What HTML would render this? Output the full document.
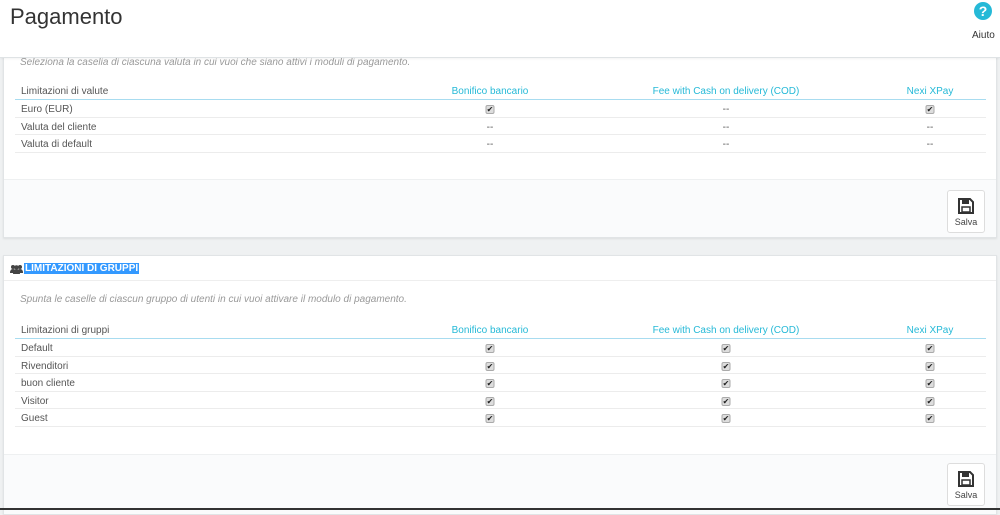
<!DOCTYPE html>
<html><head><meta charset="utf-8"><style>
*{margin:0;padding:0;box-sizing:border-box}
body{width:1000px;height:510px;overflow:hidden;background:#eff1f2;font-family:"Liberation Sans",sans-serif;position:relative;color:#555;font-size:10px}
.hdr{position:absolute;left:0;top:0;width:1000px;height:58px;background:#fff;border-bottom:1px solid #dfe3e5;z-index:5;box-shadow:0 1px 2px rgba(0,0,0,.05)}
.hdr h1{position:absolute;left:10px;top:4px;font-size:22px;font-weight:normal;color:#333}
.help{position:absolute;left:974px;top:2px;width:18px;height:18px;border-radius:50%;background:#25b9d7;color:#fff;font-weight:bold;font-size:14px;text-align:center;line-height:18px}
.aiuto{position:absolute;left:972px;top:30px;font-size:10px;color:#333}
.panel{position:absolute;left:3px;width:994px;background:#fff;border:1px solid #e1e4e6;box-shadow:0 1px 2px rgba(0,0,0,.08)}
.foot{position:absolute;left:0;right:0;bottom:0;background:#fafbfc;border-top:1px solid #eef0f1}
.desc{position:absolute;left:16px;font-style:italic;color:#999;font-size:10px}
.t{position:absolute;left:11px;width:971px}
.th{height:22px;border-bottom:1px solid #a8dcf0;position:relative}
.row{height:17.5px;border-bottom:1px solid #ececec;position:relative}
.c0{position:absolute;left:6px;top:4px}
.th .c0{top:8px}
.c{position:absolute;transform:translateX(-50%);top:4px;white-space:nowrap}
.th .c{color:#25b9d7;top:8px}
.cb{display:inline-block;width:9px;height:9px;background:#ddd;border:1px solid #aaa;border-radius:2px;font-size:8px;line-height:7px;text-align:center;color:#222;margin-top:-1px}
.save{position:absolute;width:38px;height:43px;background:#fff;border:1px solid #ddd;border-radius:3px;text-align:center;font-size:9px;color:#444}
.save svg{display:block;margin:6px auto 2px}
.ph{position:absolute;left:0;right:0;top:0;height:25px;border-bottom:1px solid #eee}
.ph span{position:absolute;left:20px;top:7px;background:#3399ff;color:#fff;font-size:10px;padding:0 1px;font-weight:bold;font-family:"Liberation Sans Narrow","Liberation Sans",sans-serif}
.bot{position:absolute;left:0;top:508px;width:1000px;height:2px;background:#333}
</style></head><body>
<div class="hdr"><h1>Pagamento</h1><div class="help">?</div><div class="aiuto">Aiuto</div></div>

<div class="panel" style="top:40px;height:198px">
 <div class="desc" style="top:16px">Seleziona la caselia di ciascuna valuta in cui vuoi che siano attivi i moduli di pagamento.</div>
 <div class="t" style="top:37px">
  <div class="th"><span class="c0">Limitazioni di valute</span><span class="c" style="left:475px">Bonifico bancario</span><span class="c" style="left:711px">Fee with Cash on delivery (COD)</span><span class="c" style="left:915px">Nexi XPay</span></div>
  <div class="row"><span class="c0">Euro (EUR)</span><span class="c" style="left:475px"><span class="cb">✔</span></span><span class="c" style="left:711px">--</span><span class="c" style="left:915px"><span class="cb">✔</span></span></div>
  <div class="row"><span class="c0">Valuta del cliente</span><span class="c" style="left:475px">--</span><span class="c" style="left:711px">--</span><span class="c" style="left:915px">--</span></div>
  <div class="row"><span class="c0">Valuta di default</span><span class="c" style="left:475px">--</span><span class="c" style="left:711px">--</span><span class="c" style="left:915px">--</span></div>
 </div>
 <div class="foot" style="height:58px"></div>
 <div class="save" style="left:943px;top:149px"><svg width="18" height="18" viewBox="0 0 18 18"><path d="M2 2h11l3 3v11H2z" fill="none" stroke="#333" stroke-width="2"/><rect x="5" y="3" width="7" height="4" fill="#333"/><rect x="5" y="10" width="8" height="5" fill="none" stroke="#333" stroke-width="1.5"/></svg>Salva</div>
</div>

<div class="panel" style="top:255px;height:260px">
 <div class="ph"><svg style="position:absolute;left:6px;top:8px" width="13" height="10" viewBox="0 0 13 10"><circle cx="3" cy="3" r="2" fill="#444"/><circle cx="10" cy="3" r="2" fill="#444"/><circle cx="6.5" cy="3.5" r="2.3" fill="#444"/><path d="M0 9q0-4 3-4t3 4zM7 9q0-4 3-4t3 4zM3 10q0-4.5 3.5-4.5T10 10z" fill="#444"/></svg><span>LIMITAZIONI DI GRUPPI</span></div>
 <div class="desc" style="top:38px">Spunta le caselle di ciascun gruppo di utenti in cui vuoi attivare il modulo di pagamento.</div>
 <div class="t" style="top:61px">
  <div class="th"><span class="c0">Limitazioni di gruppi</span><span class="c" style="left:475px">Bonifico bancario</span><span class="c" style="left:711px">Fee with Cash on delivery (COD)</span><span class="c" style="left:915px">Nexi XPay</span></div>
  <div class="row"><span class="c0">Default</span><span class="c" style="left:475px"><span class="cb">✔</span></span><span class="c" style="left:711px"><span class="cb">✔</span></span><span class="c" style="left:915px"><span class="cb">✔</span></span></div>
  <div class="row"><span class="c0">Rivenditori</span><span class="c" style="left:475px"><span class="cb">✔</span></span><span class="c" style="left:711px"><span class="cb">✔</span></span><span class="c" style="left:915px"><span class="cb">✔</span></span></div>
  <div class="row"><span class="c0">buon cliente</span><span class="c" style="left:475px"><span class="cb">✔</span></span><span class="c" style="left:711px"><span class="cb">✔</span></span><span class="c" style="left:915px"><span class="cb">✔</span></span></div>
  <div class="row"><span class="c0">Visitor</span><span class="c" style="left:475px"><span class="cb">✔</span></span><span class="c" style="left:711px"><span class="cb">✔</span></span><span class="c" style="left:915px"><span class="cb">✔</span></span></div>
  <div class="row"><span class="c0">Guest</span><span class="c" style="left:475px"><span class="cb">✔</span></span><span class="c" style="left:711px"><span class="cb">✔</span></span><span class="c" style="left:915px"><span class="cb">✔</span></span></div>
 </div>
 <div class="foot" style="top:198px"></div>
 <div class="save" style="left:943px;top:207px"><svg width="18" height="18" viewBox="0 0 18 18"><path d="M2 2h11l3 3v11H2z" fill="none" stroke="#333" stroke-width="2"/><rect x="5" y="3" width="7" height="4" fill="#333"/><rect x="5" y="10" width="8" height="5" fill="none" stroke="#333" stroke-width="1.5"/></svg>Salva</div>
</div>
<div class="bot"></div>
</body></html>
